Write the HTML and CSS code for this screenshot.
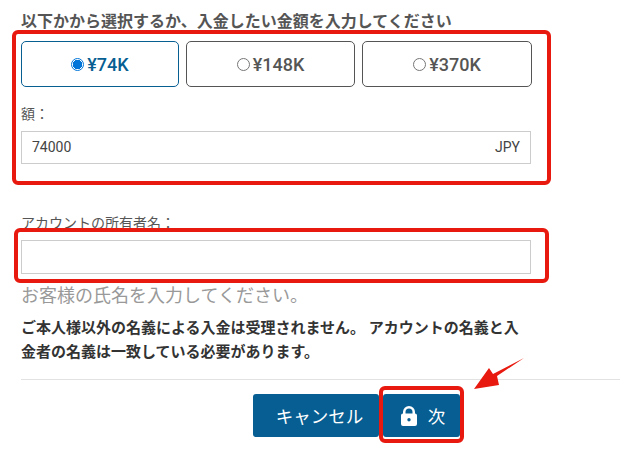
FILE: index.html
```html
<!DOCTYPE html>
<html lang="ja">
<head>
    <meta charset="UTF-8">
    <title>入金</title>
    <link rel="stylesheet" href="styles.css">
</head>
<body>
    <div class="form">
        <h3 class="title">以下かから選択するか、入金したい金額を入力してください</h3>

        <div class="options">
            <label class="option selected"><span class="radio"></span>¥74K</label>
            <label class="option"><span class="radio"></span>¥148K</label>
            <label class="option"><span class="radio"></span>¥370K</label>
        </div>

        <div class="label amount-label">額：</div>
        <div class="field amount-field">
            <span>74000</span>
            <span class="currency">JPY</span>
        </div>

        <div class="label owner-label">アカウントの所有者名：</div>
        <div class="field owner-field"></div>
        <div class="hint">お客様の氏名を入力してください。</div>

        <p class="notice">ご本人様以外の名義による入金は受理されません。 アカウントの名義と入金者の名義は一致している必要があります。</p>

        <div class="actions">
            <button class="btn btn-cancel">キャンセル</button>
            <button class="btn btn-next">
                <svg class="lock" viewBox="0 0 16 20" width="16" height="20">
                    <path fill="#fff" fill-rule="evenodd" d="M2 7.5V6a6 6 0 0 1 12 0v1.5a2 2 0 0 1 2 2V18a2 2 0 0 1-2 2H2a2 2 0 0 1-2-2V9.500a2 2 0 0 1 2-2zM4.500 7.500h7V6a3.500 3.500 0 0 0-7 0zM8 12a1.700 1.700 0 1 0 0 3.400A1.700 1.700 0 0 0 8 12z"/>
                </svg>
                次
            </button>
        </div>
    </div>

    <!-- 注釈 -->
    <div class="mark mark-amount"></div>
    <div class="mark mark-owner"></div>
    <div class="mark mark-next"></div>
    <svg class="arrow" viewBox="0 0 54 34" width="54" height="34">
        <path fill="#e8190e" d="M51 1 24 19 26 28 1 32 16 11 20 17z"/>
    </svg>
</body>
</html>
```

FILE: styles.css
```css
* {
    box-sizing: border-box;
}

body {
    margin: 0;
    background: #fff;
    font-family: Roboto, "Noto Sans CJK JP", sans-serif;
    color: #444;
    overflow: hidden;
}

.form {
    padding: 12px 0 0 21px;
}

.title {
    margin: 0;
    font-size: 16px;
    line-height: 19px;
    font-weight: 700;
    color: #555;
}

.options {
    display: flex;
    gap: 7px;
    margin-top: 10px;
    width: 511px;
}

.option {
    display: flex;
    align-items: center;
    justify-content: center;
    gap: 3px;
    flex: 0 0 169px;
    height: 46px;
    border: 1px solid #555;
    border-radius: 5px;
    font-size: 18px;
    font-weight: 500;
    color: #555;
}

.option:last-child {
    flex: 0 0 170px;
}

.option.selected {
    flex: 0 0 158px;
    border-color: #075e92;
    color: #075e92;
}

.radio {
    width: 13px;
    height: 13px;
    border: 1px solid #767676;
    border-radius: 50%;
}

.selected .radio {
    border-color: #0075d9;
    background: radial-gradient(circle, #0075d9 0 4.500px, #fff 5px);
}

.label {
    font-size: 14px;
    line-height: 18px;
    color: #555;
}

.amount-label {
    margin-top: 18px;
}

.field {
    display: flex;
    align-items: center;
    justify-content: space-between;
    width: 510px;
    border: 1px solid #ccc;
    padding: 0 10px;
    font-size: 14px;
    color: #444;
}

.amount-field {
    height: 33px;
    margin-top: 8px;
}

.amount-field span {
    position: relative;
    top: -1px;
}

.owner-label {
    margin-top: 50px;
}

.owner-field {
    height: 34px;
    margin-top: 8px;
}

.hint {
    margin-top: 11px;
    font-size: 18px;
    line-height: 22px;
    color: #999;
}

.notice {
    margin: 9px 0 0;
    width: 500px;
    font-size: 15px;
    line-height: 24px;
    font-weight: 700;
    color: #333;
}

.actions {
    display: flex;
    gap: 4px;
    margin-top: 15px;
    padding: 14px 0 0 232px;
    border-top: 1px solid #e2e2e2;
}

.btn {
    display: flex;
    align-items: center;
    justify-content: center;
    height: 43px;
    border: 0;
    border-radius: 3px;
    background: #075e92;
    color: #fff;
    font-family: inherit;
    font-size: 17.500px;
    font-weight: 400;
}

.btn-cancel {
    width: 126px;
    padding: 0 0 0 7px;
}

.btn-next {
    width: 77px;
    gap: 11px;
    padding: 0 0 0 3px;
}

/* 赤枠は内容の上に重ねる */
.mark {
    position: absolute;
    border: 4px solid #e8190e;
    border-radius: 6px;
}

.mark-amount {
    left: 12px;
    top: 30px;
    width: 539px;
    height: 155px;
}

.mark-owner {
    left: 14px;
    top: 228px;
    width: 535px;
    height: 55px;
}

.mark-next {
    left: 379px;
    top: 386px;
    width: 85px;
    height: 57px;
}

.arrow {
    position: absolute;
    left: 473px;
    top: 357px;
}
```
